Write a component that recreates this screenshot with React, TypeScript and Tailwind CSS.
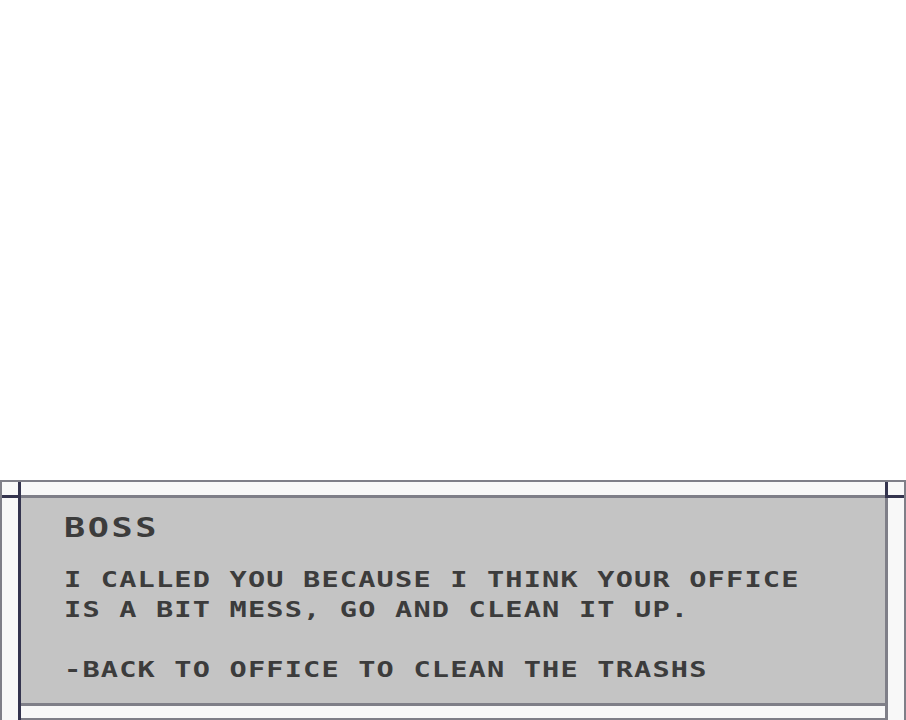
export default function App() {
  const light = "bg-[#f8f8f8]"
  const dark = "bg-[#34344e]"
  const line = "bg-[#7f7f88]"

  return (
    <div className="h-screen w-full flex flex-col bg-white overflow-hidden">
      <div className="flex-1" />
      <div
        className={`h-[240px] border-t-2 border-l-2 border-r-2 border-[#7f7f88] ${light} grid grid-cols-[16px_3px_864px_3px_16px] grid-rows-[13px_3px_205px_3px_12px_2px]`}
      >
        {/* row 1 */}
        <div className={light} />
        <div className={`${dark} row-span-6`} />
        <div className={light} />
        <div className={`${dark} row-span-2`} />
        <div className={light} />

        {/* row 2 */}
        <div className={dark} />
        <div className={line} />
        <div className={dark} />

        {/* row 3: panel */}
        <div className={light} />
        <div
          className="bg-[#c4c4c4] pl-[43px] pt-[15px] text-[#3c3c3c] uppercase overflow-hidden"
          style={{ fontFamily: '"DejaVu Sans Mono", "Liberation Mono", monospace' }}
        >
          <div className="text-[27px] leading-[30px] font-bold tracking-[2px] scale-x-[1.3] origin-left">BOSS</div>
          <div className="mt-[22px] text-[22px] leading-[30px] font-bold tracking-[0.9px] whitespace-pre scale-x-[1.3] origin-left">
            {"I CALLED YOU BECAUSE I THINK YOUR OFFICE\nIS A BIT MESS, GO AND CLEAN IT UP.\n\n-BACK TO OFFICE TO CLEAN THE TRASHS"}
          </div>
        </div>
        <div className={`${line} row-span-4`} />
        <div className={light} />

        {/* row 4 */}
        <div className={light} />
        <div className={line} />
        <div className={light} />

        {/* row 5 */}
        <div className={light} />
        <div className={light} />
        <div className={light} />

        {/* row 6 */}
        <div className={light} />
        <div className={line} />
        <div className={light} />
      </div>
    </div>
  )
}
